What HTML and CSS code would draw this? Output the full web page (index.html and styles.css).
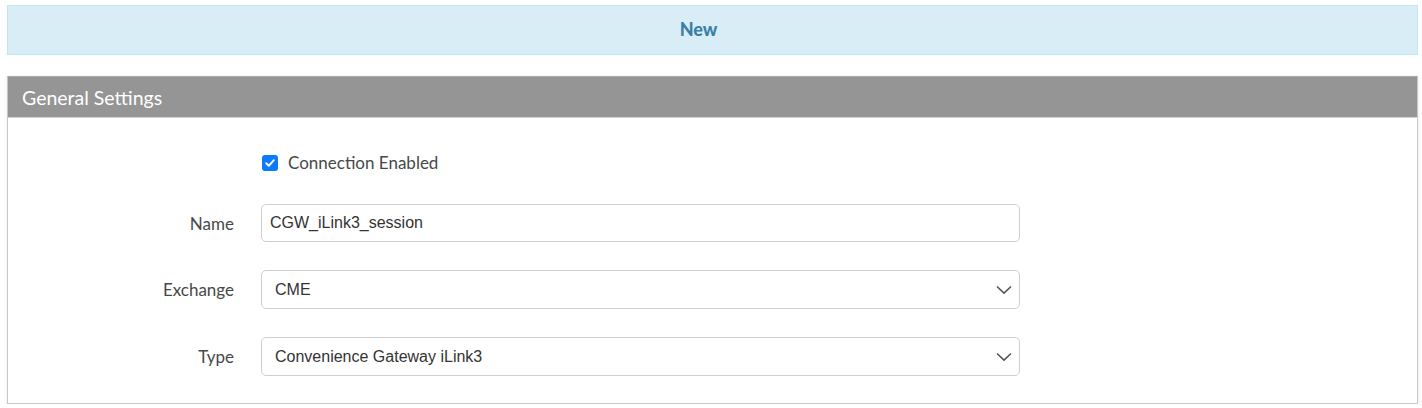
FILE: index.html
```html
<!DOCTYPE html>
<html lang="en">
<head>
  <meta charset="UTF-8">
  <title>New Connection</title>
  <link rel="stylesheet" href="styles.css">
</head>
<body>
  <div class="page">
    <div class="banner">New</div>
    <div class="panel">
      <div class="panel-heading">General Settings</div>
      <div class="panel-body">
        <div class="form-row check-row">
          <div class="form-label"></div>
          <label class="check">
            <span class="check-box">
              <svg width="12" height="12" viewBox="0 0 12 12"><path d="M2.2 6.3 L4.8 8.8 L9.8 3.2" fill="none" stroke="#fff" stroke-width="2" stroke-linecap="round" stroke-linejoin="round"/></svg>
            </span>
            Connection Enabled
          </label>
        </div>
        <div class="form-row">
          <div class="form-label">Name</div>
          <div class="field input">CGW_iLink3_session</div>
        </div>
        <div class="form-row">
          <div class="form-label">Exchange</div>
          <div class="field select">
            <span>CME</span>
            <svg class="chevron" width="16" height="10" viewBox="0 0 16 10"><path d="M1 1.5 L8 8.2 L15 1.5" fill="none" stroke="#555" stroke-width="1.6"/></svg>
          </div>
        </div>
        <div class="form-row">
          <div class="form-label">Type</div>
          <div class="field select">
            <span>Convenience Gateway iLink3</span>
            <svg class="chevron" width="16" height="10" viewBox="0 0 16 10"><path d="M1 1.5 L8 8.2 L15 1.5" fill="none" stroke="#555" stroke-width="1.6"/></svg>
          </div>
        </div>
      </div>
    </div>
  </div>
</body>
</html>
```

FILE: styles.css
```css
body {
  margin: 0;
  background: #fff;
  font-family: 'Lato', 'Open Sans', sans-serif;
  color: #333;
}
.page {
  padding: 5px 4px 0 7px;
}
.banner {
  height: 48px;
  line-height: 46px;
  background: #d9edf7;
  border: 1px solid #bce8f1;
  color: #3a7fa6;
  font-weight: 900;
  font-size: 18px;
  text-align: center;
  padding-right: 28px;
  margin-bottom: 21px;
}
.panel {
  border: 1px solid #c8c8c8;
  border-top-color: #aaa;
  box-shadow: 0 1px 3px rgba(0, 0, 0, 0.12);
  width: 1409px;
}
.panel-heading {
  height: 40px;
  line-height: 42px;
  background: #959595;
  color: #fff;
  font-size: 19.5px;
  padding-left: 14px;
  border-bottom: 1px solid #d0d0d0;
}
.panel-body {
  display: flex;
  flex-direction: column;
  gap: 28px;
  padding: 32px 0 27px 0;
}
.form-row {
  display: grid;
  grid-template-columns: 226px 759px;
  column-gap: 27px;
  align-items: center;
}
.check-row {
  height: 26px;
}
.form-label {
  text-align: right;
  font-size: 17px;
  color: #484848;
}
.check {
  display: flex;
  align-items: center;
  gap: 10px;
  font-size: 17px;
  color: #484848;
  margin-top: -1px;
}
.check-box {
  width: 16px;
  height: 16px;
  border-radius: 3px;
  background: #0a7bff;
  display: flex;
  align-items: center;
  justify-content: center;
  margin-left: 1px;
}
.field {
  height: 38px;
  box-sizing: border-box;
  border: 1px solid #cfcfcf;
  border-radius: 5px;
  font-family: 'Liberation Sans', Arial, sans-serif;
  font-size: 16px;
  color: #333;
  display: flex;
  align-items: center;
}
.input {
  padding-left: 8px;
}
.select {
  height: 39px;
  padding: 0 7px 0 13px;
  justify-content: space-between;
}
```
